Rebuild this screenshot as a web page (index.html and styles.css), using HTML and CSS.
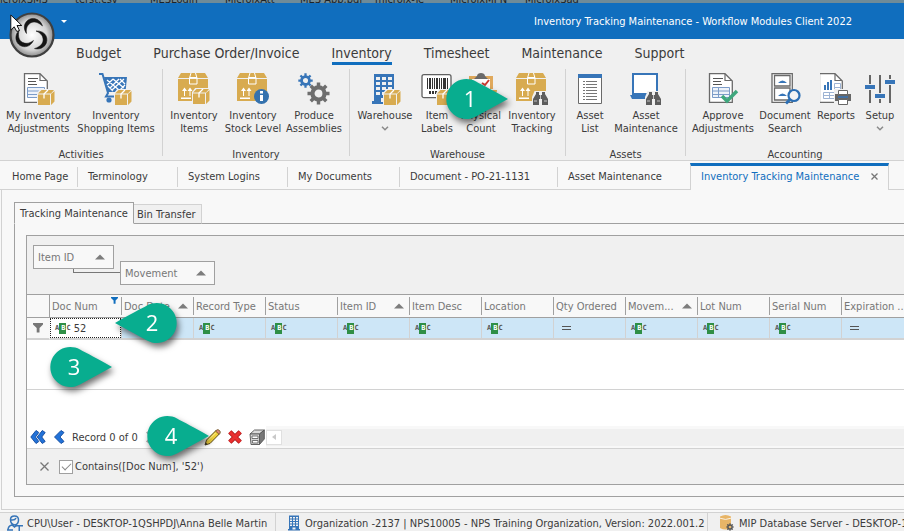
FILE: index.html
```
<!DOCTYPE html>
<html lang="en">
<head>
<meta charset="utf-8">
<title>Inventory Tracking Maintenance - Workflow Modules Client 2022</title>
<link rel="stylesheet" href="styles.css">
</head>
<body>
<svg class="defs" aria-hidden="true">
  <symbol id="box" viewBox="0 0 32 32">
    <path fill="#d8ab50" d="M3 0H27L30 5H0zM0 6H30V28H0z"/>
    <path fill="none" stroke="#fff" d="M13 0L11.500 5V11H19V5L17.500 0"/>
    <path fill="#fff" d="M12 4h7v1.500h-7z"/>
    <path fill="#fff" d="M4 18l2.500-3.500L9 18H7v5H6v-5zM9.500 18l2.500-3.500 2.500 3.500H12.500v5H11.500v-5zM3 24.500h10V26H3z"/>
  </symbol>
  <symbol id="parcel" viewBox="0 0 18 17">
    <path fill="#f0f0f0" d="M0 4L4-1H18V13L14 17H0z"/>
    <path fill="#d8ab50" d="M4.500 1H17L14 4.500H1zM1 5.500H13V16H1zM14 5L17.500 2V12.500L14 16z"/>
    <path fill="none" stroke="#fff" stroke-width="1.300" d="M11 1L7 5V9.500"/>
  </symbol>
  <symbol id="page" viewBox="0 0 32 32">
    <path fill="#fff" stroke="#6a6a6a" stroke-width="1.300" d="M2.500.7H18L25.300 8V29.300H2.500z"/>
    <path fill="none" stroke="#6a6a6a" stroke-width="1.200" d="M18 1V7.500H25"/>
  </symbol>
  <symbol id="glasses" viewBox="0 0 17 14">
    <path fill="#f0f0f0" d="M0 6L3-1H14L17 6V14H0z"/>
    <path fill="#5d5d5d" d="M1 8L4 3V1H7V4H10V1H13V3L16 8V14H10V8H7V14H1z"/>
    <path stroke="#f0f0f0" stroke-width=".7" d="M2 10h3M12 10h3M8.500 4v4"/>
  </symbol>
  <symbol id="gear" viewBox="0 0 24 24">
    <circle cx="12" cy="12" r="6.300" fill="none" stroke="currentColor" stroke-width="4.400"/>
    <path stroke="currentColor" stroke-width="3.600" d="M12 0.500V5M12 19v4.500M.5 12H5M19 12h4.500M3.900 3.900L7 7M17 17l3.100 3.100M3.900 20.100L7 17M17 7l3.100-3.100"/>
  </symbol>
  <symbol id="tower" viewBox="0 0 24 32">
    <path fill="#3775b8" d="M2 1H22V28H24V31H0V28H2z"/>
    <path fill="#f0f0f0" d="M4 4h4v3H4zM10 4h4v3h-4zM16 4h4v3h-4zM4 9h4v3H4zM10 9h4v3h-4zM16 9h4v3h-4zM4 14h4v3H4zM10 14h4v3h-4zM16 14h4v3h-4zM4 19h4v3H4zM10 19h4v3h-4zM16 19h4v3h-4zM9 25h6v4H9z"/>
  </symbol>
  <symbol id="chevron" viewBox="0 0 8 5"><path fill="none" stroke="#8a8a8a" stroke-width="1.500" d="M1 .8L4 3.800 7 .8"/></symbol>
  <symbol id="sort" viewBox="0 0 10 6"><path fill="#7d7d7d" d="M5 .5L10 5.500H0z"/></symbol>
  <symbol id="funnel" viewBox="0 0 10 10"><path fill="currentColor" d="M0 0H10V1.500L6.500 5V9.500H3.700V5L0 1.500z"/></symbol>
  <symbol id="pin" viewBox="-4 -4 72 54"><path d="M62 20L30 37.500A20 20 0 1 1 30 2.500C36 6 48 11.500 62 20z" fill="#08ad8f"/></symbol>
  <symbol id="swoosh" viewBox="0 0 48 48"><path d="M18.500 22.500C13 14.500 19 6.500 26.500 7.500 31 8.500 33.500 11.500 34.500 15 30 11 26 10 22.500 12 18.500 14.500 18 18.500 18.500 22.500z"/></symbol>
</svg>

<div class="desktop" aria-hidden="true"><span>icroixSMS</span><span>terst.csv</span><span>MESLogin</span><span>MicroixAtt</span><span>MES App.pdf</span><span>microix-Te</span><span>MicroixMPN</span><span>MicroixSag</span></div>

<header class="titlebar">
  <button class="orb" aria-label="Application menu">
    <svg viewBox="0 0 48 48" width="48" height="48">
      <defs><radialGradient id="metal" cx=".5" cy=".5" r=".5"><stop offset="0" stop-color="#fff"/><stop offset=".7" stop-color="#d4d4d4"/><stop offset="1" stop-color="#8b8b8b"/></radialGradient></defs>
      <circle cx="24" cy="24" r="21.500" fill="url(#metal)" stroke="#3f3f3f" stroke-width="2.200"/>
      <g fill="#141414" stroke="#141414" stroke-width=".5">
        <use href="#swoosh" width="48" height="48"/>
        <use href="#swoosh" width="48" height="48" transform="rotate(120 24 24)"/>
        <use href="#swoosh" width="48" height="48" transform="rotate(240 24 24)"/>
      </g>
    </svg>
  </button>
  <button class="quick" aria-label="Quick access"><svg width="6" height="3" viewBox="0 0 6 3"><path fill="#fff" d="M0 0H6L3 3z"/></svg></button>
  <h1>Inventory Tracking Maintenance - Workflow Modules Client 2022</h1>
  <svg class="cursor" width="13" height="20" viewBox="0 0 13 20"><path fill="#fff" stroke="#111" d="M.8 3V18L4.200 14.800 6.800 19.500 9.500 18.500 7 13.500H11.800z"/></svg>
</header>

<nav class="menu">
  <a href="#">Budget</a><a href="#">Purchase Order/Invoice</a><a href="#" class="current">Inventory</a><a href="#">Timesheet</a><a href="#">Maintenance</a><a href="#">Support</a>
</nav>

<div class="ribbon">
  <section class="group g-activities">
    <div class="items">
      <button><svg width="34" height="32" viewBox="0 0 34 32"><use href="#page" width="32" height="32"/><path stroke="#555" d="M6 5.500h10M6 8.500h8M6 11.500h9"/><path fill="#eef3fa" stroke="#7c9cc8" d="M5.500 14.500h17v10h-17zM5 18h18M5 21.500h18"/><use href="#parcel" x="15" y="16" width="18" height="17"/></svg><span>My Inventory<br>Adjustments</span></button>
      <button><svg width="34" height="32" viewBox="0 0 34 32"><path fill="#3775b8" d="M5 4H28L26.500 19H9z"/><path fill="none" stroke="#3775b8" stroke-width="2" d="M0 1H3.500L9 20 7 23.500H18"/><path stroke="#fff" stroke-width="1.300" d="M8 7l12 10M14 6l11 9M21 6l5 5M9 13l5 5M25 6L13 17M20 6l-9 9M14 6l-6 6M26 12l-6 6"/><circle cx="10" cy="27" r="2.600" fill="#3775b8"/><use href="#parcel" x="15" y="16" width="18" height="17"/></svg><span>Inventory<br>Shopping Items</span></button>
    </div>
    <h2>Activities</h2>
  </section>
  <section class="group g-inventory">
    <div class="items">
      <button><svg width="32" height="32" viewBox="0 0 32 32"><use href="#box" width="32" height="32"/><use href="#parcel" x="14" y="15" width="18" height="17"/></svg><span>Inventory<br>Items</span></button>
      <button><svg width="32" height="32" viewBox="0 0 32 32"><use href="#box" width="32" height="32"/><circle cx="24.500" cy="23.500" r="7.500" fill="#3572ae"/><path fill="#fff" d="M23 18h3v2.500h-3zM23 22h3v6h-3z"/></svg><span>Inventory<br>Stock Level</span></button>
      <button><svg width="32" height="32" viewBox="0 0 32 32"><g color="#3775b8"><use href="#gear" width="15" height="15"/></g><g color="#6e6e6e"><use href="#gear" x="9" y="9" width="23" height="23"/></g></svg><span>Produce<br>Assemblies</span></button>
    </div>
    <h2>Inventory</h2>
  </section>
  <section class="group g-warehouse">
    <div class="items">
      <button><svg width="32" height="32" viewBox="0 0 32 32"><use href="#tower" x="3" width="24" height="32"/><use href="#parcel" x="14" y="16" width="18" height="17"/></svg><span>Warehouse</span><svg class="more" width="8" height="5"><use href="#chevron"/></svg></button>
      <button><svg width="32" height="32" viewBox="0 0 32 32"><rect x="1" y="1.700" width="29" height="23" rx="2" fill="#fff" stroke="#5f5f5f" stroke-width="1.300"/><path fill="#333" d="M6 5h1v11H6zM8 5h2v11H8zM11 5h1v11h-1zM13 5h1v11h-1zM15 5h2v11h-2zM18 5h1v11h-1zM20 5h1v11h-1zM22 5h3v11h-3zM26 5h1v11h-1zM8 18h2v3H8zM11 18h2v3h-2zM14 18h2v3h-2z"/><use href="#parcel" x="15" y="16" width="18" height="17"/></svg><span>Item<br>Labels</span></button>
      <button><svg width="32" height="32" viewBox="0 0 32 32"><path fill="#e0a95c" d="M4 3h24v27H4z"/><path fill="#fff" d="M7 6h18v22H7z"/><path fill="#6a6a6a" d="M9 6l3-3c0-4 8-4 8 0l3 3z"/><path fill="none" stroke="#cb3b31" stroke-width="2" d="M17 10l3 2 4-5"/><use href="#parcel" x="16" y="16" width="18" height="17"/></svg><span>Physical<br>Count</span></button>
      <button><svg width="32" height="32" viewBox="0 0 32 32"><use href="#box" width="32" height="32"/><use href="#glasses" x="16" y="18" width="17" height="14"/></svg><span>Inventory<br>Tracking</span></button>
    </div>
    <h2>Warehouse</h2>
  </section>
  <section class="group g-assets">
    <div class="items">
      <button><svg width="32" height="32" viewBox="0 0 32 32"><path fill="#fff" stroke="#6a6a6a" d="M4.500 2.500h23v28h-23z"/><path fill="#3775b8" d="M4 1h24v4H4z"/><path stroke="#777" d="M9 8.500h2m1 0h11M9 11.500h2m1 0h11M9 14.500h2m1 0h11M9 17.500h2m1 0h11M9 20.500h2m1 0h11M9 23.500h2m1 0h11M9 26.500h2m1 0h11"/></svg><span>Asset<br>List</span></button>
      <button><svg width="32" height="32" viewBox="0 0 32 32"><path fill="#fff" stroke="#3775b8" stroke-width="2" d="M3 1h24v20H3z"/><path fill="#3775b8" d="M0 22h17v4H2z"/><use href="#glasses" x="15" y="18" width="17" height="14"/></svg><span>Asset<br>Maintenance</span></button>
    </div>
    <h2>Assets</h2>
  </section>
  <section class="group g-accounting">
    <div class="items">
      <button><svg width="32" height="32" viewBox="0 0 32 32"><use href="#page" width="32" height="32"/><path stroke="#555" d="M6 5.500h10M6 8.500h8M6 11.500h9"/><path fill="#eef3fa" stroke="#7c9cc8" d="M5.500 14.500h17v10h-17zM5 18h18M5 21.500h18M11.500 14v10"/><path fill="none" stroke="#3fa77d" stroke-width="3.500" d="M15 23l5 5 10-10"/></svg><span>Approve<br>Adjustments</span></button>
      <button><svg width="32" height="32" viewBox="0 0 32 32"><path fill="#fff" stroke="#6a6a6a" stroke-width="1.300" d="M3 .7H23.300V29.300H3zM5.500 2.500H21V13H5.500zM5.500 15H21V27H5.500z"/><path fill="#3775b8" d="M9 10q4.500-5 9 0zM9 23q4.500-5 9 0z"/><circle cx="25" cy="22.500" r="5.500" fill="#f4f4f4" stroke="#2c6fb4" stroke-width="2.200"/><path stroke="#2c6fb4" stroke-width="3" d="M21 26.500l-4 4"/></svg><span>Document<br>Search</span></button>
      <button><svg width="32" height="32" viewBox="0 0 32 32"><g transform="translate(-3)"><use href="#page" width="32" height="32"/></g><path fill="#3775b8" d="M4 12h2v5H4zM7 9h2v8H7zM10 7h2v10h-2z"/><path fill="none" stroke="#9db3d3" d="M3.500 19.500h12v6h-12zM3 22.500h12M9.500 19v6M14.500 10.500h6v8h-6zM14 14.500h6"/><path fill="#f0f0f0" d="M14 16h18v16H14z"/><path fill="#666" d="M15 21h16v7H15z"/><path fill="#fff" stroke="#666" d="M18.500 17.500h9v4h-9zM18.500 26.500h9v5h-9z"/><path stroke="#3775b8" stroke-width="1.500" d="M18 24h10"/></svg><span>Reports</span></button>
      <button><svg width="32" height="32" viewBox="0 0 32 32"><path fill="#666" d="M5 2h2v28H5zM15 2h2v28h-2zM25 2h2v28h-2z"/><path fill="#f0f0f0" d="M0 11h11v6H0zM10 20h12v6H10zM20 6h12v6H20z"/><path fill="#3775b8" d="M1 12h10v4H1zM11 21h10v4H11zM21 7h10v4H21z"/></svg><span>Setup</span><svg class="more" width="8" height="5"><use href="#chevron"/></svg></button>
    </div>
    <h2>Accounting</h2>
  </section>
</div>

<nav class="pages">
  <a href="#">Home Page</a><a href="#">Terminology</a><a href="#">System Logins</a><a href="#">My Documents</a><a href="#">Document - PO-21-1131</a><a href="#">Asset Maintenance</a>
  <div class="open"><a href="#">Inventory Tracking Maintenance</a><button aria-label="Close tab"><svg width="7" height="7" viewBox="0 0 7 7"><path stroke="#777" stroke-width="1.300" d="M.5 .5l6 6M6.500 .5l-6 6"/></svg></button></div>
</nav>

<main class="workspace">
  <div class="subtabs"><button class="active">Tracking Maintenance</button><button>Bin Transfer</button></div>
  <div class="frame">
    <div class="grid">
      <div class="grouping">
        <button>Item ID<svg width="10" height="6"><use href="#sort"/></svg></button>
        <i></i>
        <button>Movement<svg width="10" height="6"><use href="#sort"/></svg></button>
      </div>
      <table>
        <colgroup><col class="mark"><col span="12"></colgroup>
        <thead><tr>
          <th></th>
          <th class="filtered"><div><span>Doc Num</span><svg width="7" height="7"><use href="#funnel"/></svg></div></th>
          <th><div><span>Doc Date</span><svg width="10" height="6"><use href="#sort"/></svg></div></th>
          <th><div><span>Record Type</span></div></th>
          <th><div><span>Status</span></div></th>
          <th><div><span>Item ID</span><svg width="10" height="6"><use href="#sort"/></svg></div></th>
          <th><div><span>Item Desc</span></div></th>
          <th><div><span>Location</span></div></th>
          <th><div><span>Qty Ordered</span></div></th>
          <th><div><span>Movem...</span><svg width="10" height="6"><use href="#sort"/></svg></div></th>
          <th><div><span>Lot Num</span></div></th>
          <th><div><span>Serial Num</span></div></th>
          <th><div><span>Expiration ...</span></div></th>
        </tr></thead>
        <tbody><tr>
          <td class="mark"><svg width="10" height="10"><use href="#funnel"/></svg></td>
          <td class="editing"><label><span class="abc">A<b>B</b>C</span><input value="52" aria-label="Doc Num filter"></label></td>
          <td></td>
          <td><span class="abc">A<b>B</b>C</span></td>
          <td><span class="abc">A<b>B</b>C</span></td>
          <td><span class="abc">A<b>B</b>C</span></td>
          <td><span class="abc">A<b>B</b>C</span></td>
          <td><span class="abc">A<b>B</b>C</span></td>
          <td><span class="eq"></span></td>
          <td><span class="abc">A<b>B</b>C</span></td>
          <td><span class="abc">A<b>B</b>C</span></td>
          <td><span class="abc">A<b>B</b>C</span></td>
          <td><span class="eq"></span></td>
        </tr></tbody>
      </table>
      <div class="rows"></div>
      <div class="spare"></div>
      <div class="navigator">
        <button aria-label="First"><svg width="16" height="16" viewBox="0 0 16 16"><path fill="#2272d8" stroke="#124a9c" stroke-width=".9" d="M6 1.500L8.800 3.500 5.500 8l3.300 4.500L6 14.500.8 8zM12.300 1.500L15.200 3.500 11.800 8l3.400 4.500-2.900 2L7.200 8z"/></svg></button>
        <button aria-label="Previous"><svg width="12" height="16" viewBox="0 0 12 16"><path fill="#2272d8" stroke="#124a9c" stroke-width=".9" d="M8 1.500L11 3.500 7 8l4 4.500-3 2L1.500 8z"/></svg></button>
        <span>Record 0 of 0</span>
        <button aria-label="Next" class="next"><svg width="12" height="16" viewBox="0 0 12 16"><path fill="#aaa" d="M4 1.500L1 3.500 5 8l-4 4.500 3 2L10.500 8z"/></svg></button>
        <button aria-label="Edit"><svg width="17" height="17" viewBox="0 0 17 17"><path fill="#f0d13c" stroke="#5e4a16" d="M1 16l1.500-5L12 1.500l3.500 3.300L6 14.500z"/><path fill="#d98978" stroke="#5e4a16" stroke-width=".7" d="M11.500 2l1-1q1.500-1 3 .5t.5 2.800l-1 1z"/><path stroke="#fff2a0" d="M4 11.500L11.500 4"/><path fill="#333" d="M1 16l.8-2.500L3.500 15.200z"/></svg></button>
        <button aria-label="Delete"><svg width="14" height="14" viewBox="0 0 14 14"><path stroke="#a51313" stroke-width="4.600" d="M1.800 1.800l10.400 10.400M12.200 1.800L1.800 12.200"/><path stroke="#e93030" stroke-width="3.200" d="M1.800 1.800l10.400 10.400M12.200 1.800L1.800 12.200"/></svg></button>
        <button aria-label="Save layout"><svg width="16" height="16" viewBox="0 0 16 16"><path fill="#dcdcdc" stroke="#555" stroke-width=".9" d="M5.500 1H15.300L10.500 5H1z"/><path fill="#777" stroke="#555" stroke-width=".9" d="M15.300 1V10L10.500 15.500V5z"/><path fill="#d8d8d8" stroke="#555" stroke-width=".9" d="M1 5h9.500v10.500H2z"/><path fill="#fff" stroke="#555" stroke-width=".8" d="M3 7h6v2.500H3zM3.300 11.500H9V14H3.500z"/></svg></button>
        <div class="scroll"><button aria-label="Scroll left"><svg width="4" height="6" viewBox="0 0 4 6"><path fill="#c9c9c9" d="M4 0V6L0 3z"/></svg></button></div>
      </div>
      <div class="criteria">
        <button aria-label="Clear filter"><svg width="9" height="9" viewBox="0 0 9 9"><path stroke="#777" stroke-width="1.300" d="M.5 .5l8 8M8.500 .5l-8 8"/></svg></button>
        <label><input type="checkbox" checked>Contains([Doc Num], '52')</label>
      </div>
    </div>
  </div>
</main>

<footer class="status">
  <div><svg width="16" height="17" viewBox="0 0 16 17"><path fill="none" stroke="#3775b8" stroke-width="1.500" d="M3.500 4.500q0-3.500 4-3.500t4 4-3.500 5Q3.500 9.500 3.500 4.500zM4 5q4 .5 5-2M1 15q0-4 4-5l2.500 2L10 10M0 15h6"/><path fill="#3775b8" d="M8 10h8v1.500h-3V17h-1.500v-5.500H8z"/></svg>CPU\User - DESKTOP-1QSHPDJ\Anna Belle Martin</div>
  <div><svg width="12" height="16"><use href="#tower"/></svg>Organization -2137 | NPS10005 - NPS Training Organization, Version: 2022.001.2</div>
  <div><svg width="14" height="16" viewBox="0 0 14 16"><path fill="#e8b567" d="M0 1.500q5.500-3 11 0V13q-5.500 3-11 0z"/><path fill="none" stroke="#fff" stroke-width=".8" d="M0 3.200q5.500 2.500 11 0"/><g color="#555"><use href="#gear" x="6" y="8" width="8" height="8"/></g></svg>MIP Database Server - DESKTOP-1QSHPDJ</div>
</footer>

<div class="callout c1"><svg width="72" height="54"><use href="#pin"/></svg><b>1</b></div>
<div class="callout c2 left"><svg width="72" height="54"><use href="#pin"/></svg><b>2</b></div>
<div class="callout c3"><svg width="72" height="54"><use href="#pin"/></svg><b>3</b></div>
<div class="callout c4"><svg width="72" height="54"><use href="#pin"/></svg><b>4</b></div>
</body>
</html>
```
FILE: styles.css
```
* { box-sizing: border-box; }

body {
  margin: 0;
  height: 100vh;
  display: flex;
  flex-direction: column;
  overflow: hidden;
  position: relative;
  background: #f8f8f8;
  color: #3b3b3b;
  font: 11px/13px "DejaVu Sans Condensed", Tahoma, "Open Sans", sans-serif;
}

body > * { flex: none; }

button, input { font: inherit; color: inherit; }
button { background: none; border: 0; padding: 0; margin: 0; white-space: nowrap; }
a { color: inherit; text-decoration: none; white-space: nowrap; }
svg { display: block; flex: none; }
h1, h2 { margin: 0; font: inherit; }
.defs { position: absolute; width: 0; height: 0; }

/* Sliver of desktop above the window */
.desktop {
  height: 3px;
  display: flex;
  align-items: flex-end;
  overflow: hidden;
  background: #6f8b98;
  color: #1c2225;
  white-space: nowrap;
  line-height: 7px;
}
.desktop span { width: 75px; flex: none; }

.titlebar {
  height: 36px;
  display: flex;
  align-items: center;
  background: #106ebe;
  color: #fff;
  position: relative;
}
.titlebar h1 { margin-left: auto; margin-right: 52px; white-space: nowrap; }
.orb { position: absolute; left: 8px; top: 8px; z-index: 2; }
.quick { margin-left: 61px; }
.cursor { position: absolute; left: 10px; top: 9px; z-index: 3; }

.menu {
  height: 29px;
  display: flex;
  gap: 32px;
  padding-left: 76px;
  background: #f0f0f0;
  font-size: 14px;
}
.menu a { height: 26px; line-height: 28px; }
.menu .current { border-bottom: 3px solid #106ebe; }

.ribbon {
  display: flex;
  height: 93px;
  padding: 1px 0 4px;
  background: #f0f0f0;
  border-bottom: 1px solid #d2d2d2;
}
.group {
  display: flex;
  flex-direction: column;
  border-right: 1px solid #d2d2d2;
  flex: none;
}
.group:last-child { flex: 1; border-right: 0; }
.group h2 { text-align: center; line-height: 12px; }
.items { display: grid; height: 80px; flex: none; padding-top: 4px; align-items: start; justify-content: start; }
.items button {
  display: flex;
  flex-direction: column;
  align-items: center;
  gap: 4px;
}
.items span { text-align: center; }
.g-activities { width: 163px; }
.g-activities .items { grid-template-columns: 75px 80px; padding-left: 1px; }
.g-inventory { width: 187px; }
.g-inventory .items { grid-template-columns: 56px 62px 60px; padding-left: 3px; }
.g-warehouse { width: 216px; }
.g-warehouse .items { grid-template-columns: 62px 42px 46px 56px; padding-left: 4px; }
.g-assets { width: 120px; }
.g-assets .items { grid-template-columns: 40px 72px; padding-left: 4px; }
.g-accounting .items { grid-template-columns: 70px 54px 48px 40px; padding-left: 2px; }

.pages {
  height: 29px;
  display: flex;
  align-items: center;
  padding: 2px 15px 0 0;
  box-shadow: inset 0 -1px #d2d2d2;
}
.pages > a {
  height: 20px;
  line-height: 20px;
  padding: 0 10px;
  border-right: 1px solid #d2d2d2;
  flex: none;
}
.pages > a:nth-child(1) { width: 78px; padding-left: 12px; }
.pages > a:nth-child(2) { width: 100px; }
.pages > a:nth-child(3) { width: 110px; }
.pages > a:nth-child(4) { width: 112px; }
.pages > a:nth-child(5) { width: 158px; }
.pages > a:nth-child(6) { flex: 1; border-right: 0; }
.open {
  align-self: stretch;
  width: 199px;
  display: flex;
  align-items: center;
  justify-content: space-between;
  padding: 0 10px 3px;
  background: #f8f8f8;
  border: 1px solid #d2d2d2;
  border-width: 0 1px;
  border-top: 3px solid #106ebe;
  color: #106ebe;
}

.workspace {
  flex: 1;
  min-height: 0;
  display: flex;
  flex-direction: column;
  margin: 0 0 2px 1px;
  padding: 12px 0 12px 12px;
  border-left: 1px solid #d2d2d2;
  border-bottom: 1px solid #d2d2d2;
}
.subtabs { display: flex; align-items: flex-end; margin-bottom: -1px; z-index: 1; }
.subtabs button {
  height: 20px;
  padding: 0 5px 0 3px;
  background: #f0f0f0;
  border: 1px solid #d2d2d2;
  border-left: 0;
  border-bottom-color: #a0a0a0;
}
.subtabs .active {
  height: 22px;
  width: 120px;
  padding: 0;
  background: #f8f8f8;
  border: 1px solid #a0a0a0;
  border-bottom-color: #f8f8f8;
}
.frame {
  flex: 1;
  min-height: 0;
  display: flex;
  padding: 11px 0 11px 11px;
  border: 1px solid #a0a0a0;
  border-right: 0;
}
.grid {
  flex: 1;
  min-width: 0;
  display: flex;
  flex-direction: column;
  overflow: hidden;
  border: 1px solid #a0a0a0;
  border-right: 0;
}
.grid > * { flex: none; }

.grouping {
  height: 59px;
  display: flex;
  padding: 9px 6px;
  background: #f0f0f0;
  border-bottom: 1px solid #a0a0a0;
  color: #777;
}
.grouping button {
  width: 81px;
  height: 24px;
  padding: 0 8px 0 4px;
  display: flex;
  align-items: center;
  justify-content: space-between;
  background: #f8f8f8;
  border: 1px solid #a0a0a0;
}
.grouping button:last-child { width: 95px; margin-top: 16px; }
.grouping i {
  width: 47px;
  height: 4px;
  margin: 24px 0 0 -41px;
  border: 1px solid #777;
  border-width: 0 0 1px 1px;
}

table { width: 887px; table-layout: fixed; border-collapse: separate; border-spacing: 0; }
col { width: 72px; }
col.mark { width: 23px; }
th {
  height: 23px;
  padding: 2px 0;
  font-weight: normal;
  text-align: left;
  color: #777;
  border-bottom: 1px solid #a0a0a0;
}
th div {
  height: 18px;
  display: flex;
  align-items: center;
  justify-content: space-between;
  padding: 0 5px 0 2px;
  border-right: 1px solid #a0a0a0;
  white-space: nowrap;
}
th:last-child div { padding-right: 0; }
th:first-child { border-right: 1px solid #a0a0a0; }
th.filtered div { padding-right: 3px; }
.filtered svg { color: #106ebe; align-self: flex-start; }
td {
  height: 22px;
  padding: 0 0 0 5px;
  background: #cde6f7;
  border-right: 1px solid #d2d2d2;
  border-bottom: 2px solid #d2d2d2;
}
td.mark { background: #f8f8f8; color: #777; padding-left: 6px; border-right-color: #f8f8f8; }
td.editing { padding: 0; background: #fff; }
.editing label {
  height: 20px;
  display: flex;
  align-items: center;
  padding-left: 4px;
  border: 1px dotted #222;
}
.editing input {
  width: 40px;
  padding: 0 0 0 3px;
  border: 0;
  outline: 0;
  background: none;
}
.abc {
  display: flex;
  align-items: center;
  font: bold 7px/11px "DejaVu Sans Mono", monospace;
  color: #555;
}
.abc b { padding: 0 1px 0 2px; background: #2f8f46; color: #fff; }
.eq { display: block; width: 9px; height: 4px; margin-left: 3px; border: 1px solid #555; border-width: 1px 0; }

.grid .rows { flex: 1; min-height: 20px; background: #fff; border-bottom: 1px solid #d2d2d2; }
.spare { height: 36px; background: #fff; }

.navigator {
  height: 23px;
  display: flex;
  align-items: center;
  padding-left: 3px;
  background: linear-gradient(to right, #fff 239px, #f8f8f8 239px);
  border-bottom: 1px solid #d2d2d2;
}
.navigator span { margin: 0 7px; white-space: nowrap; }
.navigator button + button { margin-left: 7px; }
.navigator .next { margin-right: 40px; }
.scroll { flex: 1; margin-left: 1px; height: 17px; background: #f0f0f0; }
.scroll button {
  width: 16px;
  height: 15px;
  margin-top: 1px;
  display: flex;
  align-items: center;
  justify-content: center;
  background: #fff;
  border: 1px solid #e0e0e0;
}

.criteria {
  height: 35px;
  display: flex;
  align-items: center;
  gap: 10px;
  padding-left: 13px;
  background: #f0f0f0;
}
.criteria label { display: flex; align-items: center; gap: 2px; }
.criteria input {
  appearance: none;
  width: 14px;
  height: 14px;
  margin: 0;
  display: grid;
  place-items: center;
  background: #fff;
  border: 1px solid #a0a0a0;
}
.criteria input:checked::before {
  content: "";
  width: 8px;
  height: 4px;
  border: 1px solid #888;
  border-width: 0 0 1px 1px;
  transform: translateY(-1px) rotate(-45deg);
}

.status {
  height: 19px;
  display: flex;
  overflow: hidden;
  background: #f0f0f0;
  border-top: 1px solid #d2d2d2;
  white-space: nowrap;
}
.status div {
  display: flex;
  flex: none;
  align-items: center;
  gap: 5px;
  padding: 2px 0 0 7px;
}
.status div:nth-child(1) { width: 276px; gap: 4px; border-right: 1px solid #d2d2d2; }
.status div:nth-child(2) { width: 432px; padding-left: 12px; border-right: 1px solid #d2d2d2; }
.status div:nth-child(3) { padding-left: 12px; }

/* Step markers laid over the window */
.callout {
  position: absolute;
  z-index: 5;
  color: #fff;
  filter: drop-shadow(2px 4px 3px rgb(0 0 0 / 55%));
}
.callout b {
  position: absolute;
  left: 0;
  top: 8px;
  width: 56px;
  text-align: center;
  font: 22px/30px "Open Sans", sans-serif;
}
.callout.left svg { transform: scaleX(-1); }
.callout.left b { left: auto; right: 0; width: 58px; }
.c1 { left: 442px; top: 75px; }
.c2 { left: 109px; top: 299px; }
.c3 { left: 46px; top: 343px; }
.c4 { left: 143px; top: 412px; }
```
